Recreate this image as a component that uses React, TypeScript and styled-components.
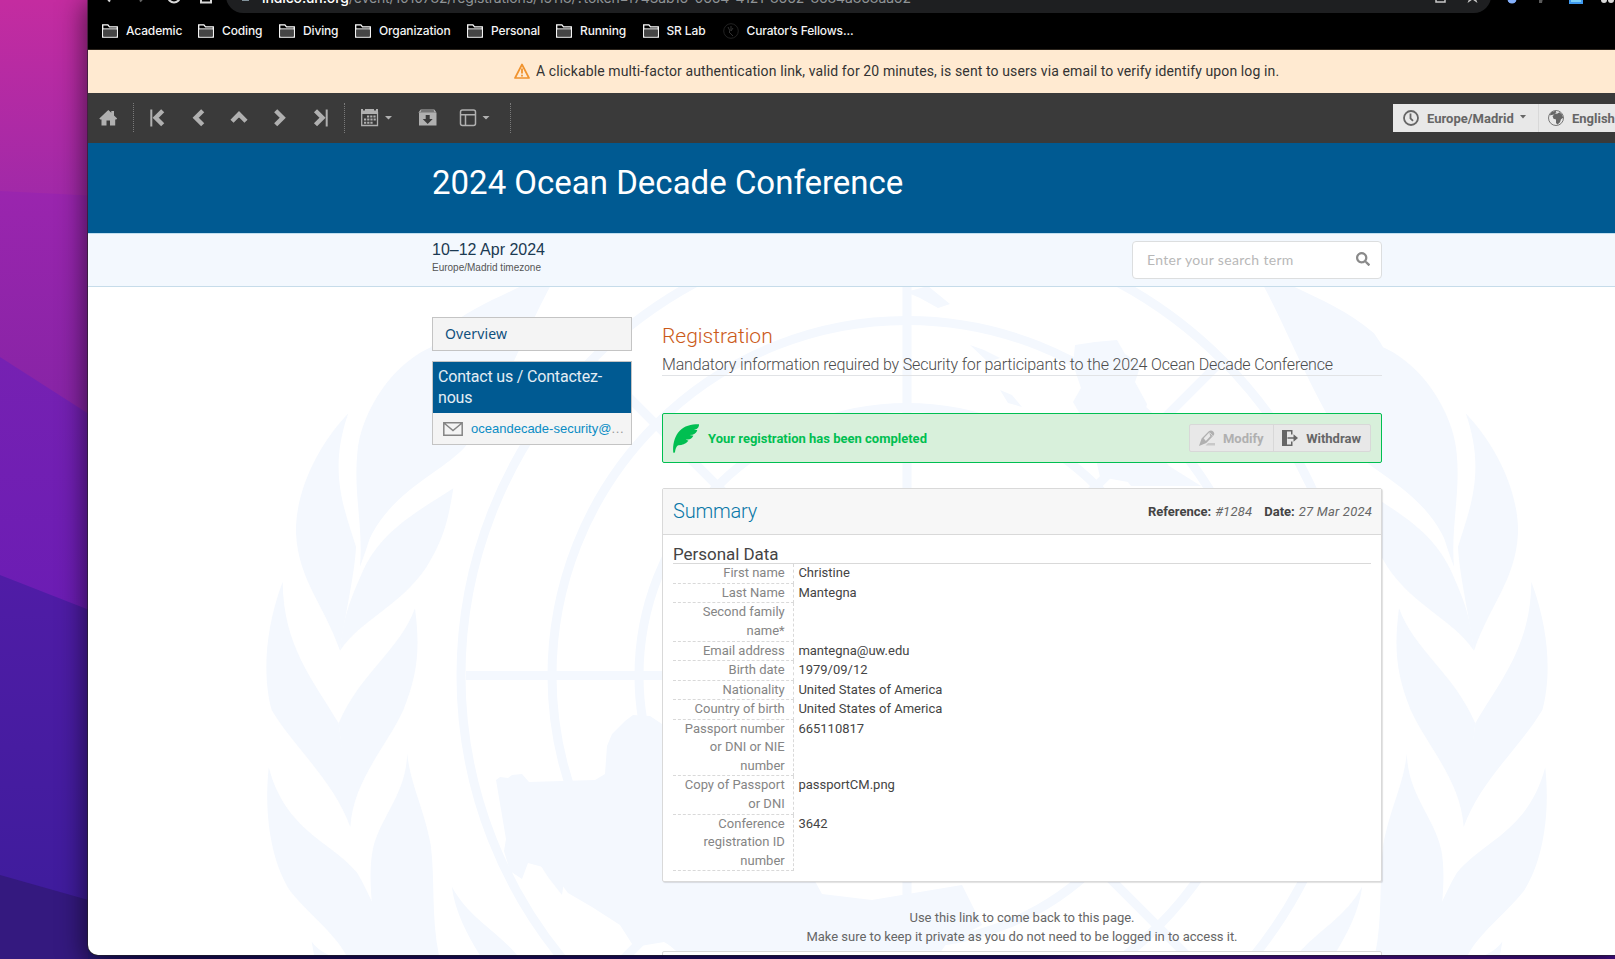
import React from 'react';
import styled, { createGlobalStyle } from 'styled-components';
import { FaSearch } from 'react-icons/fa';

const GlobalStyle = createGlobalStyle`
  * { box-sizing: border-box; }
  body { margin: 0; overflow: hidden; background: #200f60; font-family: Roboto, sans-serif; font-size: 13px; color: #555; }
`;

/* ---------- desktop and window frame ---------- */

const Desktop = styled.div`
  position: relative;
  width: 100vw;
  height: 959px;
  overflow: hidden;
  padding-left: 88px;
`;

const Wallpaper = styled.svg`
  position: absolute;
  inset: 0;
  width: 100%;
  height: 100%;
`;

const BrowserWindow = styled.div`
  position: relative;
  display: flex;
  flex-direction: column;
  height: 954.5px;
  background: #fff;
  border-bottom-left-radius: 10px;
  box-shadow: 0 0 0 0.6px #222, 0 6px 26px 4px rgba(0, 0, 0, 0.55);
  clip-path: inset(0 0 -10px -88px);
`;

const Page = styled.div`
  position: relative;
  flex: 1;
  display: flex;
  flex-direction: column;
  overflow: hidden;
  border-bottom-left-radius: 10px;
`;

/* ---------- browser chrome ---------- */

const Chrome = styled.div`
  flex: none;
  height: 50px;
  overflow: hidden;
  background: #000;
  border-bottom: 1px solid #2b241c;
`;

const AddressRow = styled.div`
  display: flex;
  align-items: flex-end;
  height: 13px;
`;

const NavIcons = styled.svg`
  flex: none;
  width: 138px;
  height: 13px;
`;

const AddressBar = styled.div`
  display: flex;
  align-items: flex-end;
  width: 1265px;
  height: 34px;
  border-radius: 17px;
  padding: 0 12px 0 10px;
  background: #1e1f21;
`;

const LockIcon = styled.svg`
  flex: none;
  width: 26px;
  height: 13px;
`;

const Url = styled.div`
  flex: 1;
  font: 400 14px/20px Inter, sans-serif;
  height: 25px;
  letter-spacing: -0.12px;
  white-space: nowrap;
  color: #8f9396;
  b { font-weight: 500; color: #fff; }
`;

const ExtensionIcons = styled.svg`
  flex: none;
  width: 124px;
  height: 13px;
`;

const BarIcons = styled.svg`
  flex: none;
  width: 58px;
  height: 13px;
`;

const Bookmarks = styled.div`
  display: flex;
  align-items: center;
  gap: 16px;
  height: 36px;
  padding-left: 14px;
`;

const Bookmark = styled.div<{ $label: number }>`
  display: flex;
  align-items: center;
  gap: 8px;
  font: 500 12px/16px Inter, sans-serif;
  letter-spacing: -0.14px;
  color: #f4f4f4;
  white-space: nowrap;
  svg { flex: none; }
  span { width: ${p => p.$label}px; }
`;

/* ---------- site header ---------- */

const Notice = styled.div`
  flex: none;
  display: flex;
  align-items: center;
  gap: 6px;
  height: 43px;
  padding: 0 0 1px 426px;
  background: #ffead1;
  color: #333;
  font-size: 14px;
  letter-spacing: 0.115px;
  white-space: nowrap;
`;

const Toolbar = styled.div`
  flex: none;
  display: flex;
  align-items: flex-start;
  height: 50px;
  padding-top: 10px;
  background: #3a3a3a;
`;

const ToolGroup = styled.div<{ $width: number }>`
  flex: none;
  width: ${p => p.$width}px;
  height: 30px;
  border-right: 1px dotted #7a7a7a;
  svg { display: block; }
`;

const Settings = styled.div`
  display: flex;
  margin-left: auto;
  margin-top: 1px;
  width: 222px;
  height: 28px;
  overflow: hidden;
  background: #e8e8e8;
`;

const Setting = styled.div<{ $width: number }>`
  flex: none;
  display: flex;
  align-items: center;
  width: ${p => p.$width}px;
  padding-left: 10px;
  border-right: 1px solid #d8d8d8;
  color: #666;
  font-weight: 700;
  span { margin: 1px 6px 0 8px; }
  & + & { padding-left: 9px; }
`;

const TitleBar = styled.header`
  flex: none;
  height: 90px;
  padding: 20px 0 0 344px;
  background: #005a92;
  color: #fff;
  font-size: 33px;
  line-height: 39px;
  letter-spacing: 0;
`;

const InfoStrip = styled.div`
  flex: none;
  display: flex;
  justify-content: space-between;
  width: 100%;
  height: 54px;
  padding: 7px 233px 0 344px;
  background: #f3f8fe;
  border-top: 1px solid #c0dff0;
  border-bottom: 1px solid #c6dcea;
`;

const EventDate = styled.div`
  font: 16px/18px "Liberation Sans", sans-serif;
  letter-spacing: 0;
  color: #1b3a52;
  small { display: block; font-size: 10px; line-height: 18px; color: #555; }
`;

const SearchBox = styled.div`
  display: flex;
  align-items: center;
  justify-content: space-between;
  width: 250px;
  height: 38px;
  padding: 0 11px 2px 14px;
  border: 1px solid #dcdedf;
  border-radius: 4px;
  background: #fff;
  font: 14px Lato, sans-serif;
  letter-spacing: 0.33px;
  color: #b8b8b8;
`;

/* ---------- body ---------- */

const Body = styled.div`
  position: relative;
  flex: 1;
  display: flex;
  gap: 30px;
  padding: 30px 233px 0 344px;
  overflow: hidden;
`;

const Watermark = styled.svg`
  position: absolute;
  left: 0;
  top: 0;
`;

const Sidebar = styled.aside`
  position: relative;
  flex: none;
  width: 200px;
`;

const MenuItem = styled.div`
  height: 34px;
  padding-left: 12px;
  margin-bottom: 10px;
  border: 1px solid #c4c4c4;
  background: #f4f4f4;
  font: 14px/32px "Noto Sans", sans-serif;
  letter-spacing: 0.12px;
  color: #10507c;
`;

const ContactCard = styled.div`
  height: 84px;
  border: 1px solid #c4c4c4;
  background: #f4f4f4;
`;

const ContactTitle = styled.div`
  height: 51px;
  padding: 4px 5px;
  background: #005a92;
  color: #e4edf4;
  font-size: 16px;
  font-weight: 400;
  line-height: 21px;
  letter-spacing: -0.19px;
`;

const ContactMail = styled.div`
  display: flex;
  align-items: center;
  height: 31px;
  padding-left: 10px;
  font: 13px "Liberation Sans", sans-serif;
  letter-spacing: 0.7px;
  color: #999;
  a { margin-left: 8px; color: #0a8cc4; letter-spacing: 0; }
`;

const Main = styled.main`
  position: relative;
  flex: none;
  width: 720px;
`;

const Heading = styled.h1`
  margin: 5px 0 0;
  font-size: 21px;
  font-weight: 300;
  line-height: 28px;
  color: #cb5a18;
`;

const SubHeading = styled.div`
  height: 26px;
  border-bottom: 1px solid #e1e3e6;
  font-size: 16px;
  font-weight: 300;
  line-height: 29px;
  letter-spacing: -0.165px;
  color: #4c4c4c;
  white-space: nowrap;
`;

const Completed = styled.div`
  display: flex;
  align-items: center;
  height: 50px;
  margin-top: 37px;
  padding: 0 10px;
  border: 1px solid #00bf51;
  border-radius: 2px;
  background: #d8f0db;
  color: #00bf51;
  font-weight: 700;
  > span { flex: 1; margin-left: 9px; }
`;

const ButtonGroup = styled.div`
  display: flex;
  height: 28px;
  border: 1px solid #d8d8d8;
  border-radius: 2px;
  background: #e8e8e8;
`;

const ActionButton = styled.div<{ $muted?: boolean }>`
  display: flex;
  align-items: center;
  gap: 8px;
  padding: 0 9.5px 0 9px;
  color: ${p => (p.$muted ? '#b0b0b0' : '#666')};
  & + & { border-left: 1px solid #d8d8d8; padding-left: 8px; padding-right: 9px; }
`;

const Panel = styled.section`
  height: 394px;
  margin-top: 25px;
  border: 1px solid #d9d9d9;
  border-radius: 2px;
  background: #fff;
  box-shadow: 1px 1px 1px rgba(0, 0, 0, 0.12);
`;

const PanelHeader = styled.div`
  display: flex;
  align-items: center;
  justify-content: space-between;
  height: 46px;
  padding: 0 9px 0 10px;
  border-bottom: 1px solid #d9d9d9;
  background: #f7f7f7;
`;

const PanelTitle = styled.div`
  padding-bottom: 2px;
  font-size: 20px;
  font-weight: 300;
  letter-spacing: -0.2px;
  color: #0a78a8;
`;

const Meta = styled.div`
  display: flex;
  gap: 4px;
  color: #666;
  b { color: #444; }
  i { letter-spacing: 0.2px; }
  i + b { margin-left: 8px; }
`;

const SectionTitle = styled.h2`
  margin: 0 10px 0.8px;
  height: 28.5px;
  border-bottom: 1px solid #d9d9d9;
  font-size: 17px;
  font-weight: 400;
  line-height: 39px;
  letter-spacing: -0.04px;
  color: #444;
`;

const Row = styled.div`
  display: flex;
  margin-left: 10px;
  line-height: 18.57px;
`;

const Label = styled.div`
  width: 121px;
  padding: 0 8.3px 0 0;
  border-right: 1px dashed #d9d9d9;
  border-bottom: 1px dashed #d9d9d9;
  text-align: right;
  color: #858585;
  white-space: pre-line;
`;

const Value = styled.div`
  padding-left: 4.4px;
  color: #444;
`;

const LinkNote = styled.p`
  margin: 26px 0 5px;
  text-align: center;
  line-height: 19px;
  letter-spacing: -0.02px;
  color: #666;
`;

const LinkBox = styled.div`
  height: 40px;
  border: 1px solid #d9d9d9;
  border-radius: 2px;
  background: #fff;
`;

/* ---------- icons ---------- */

const Folder = () => (
  <svg width="16" height="14" viewBox="0 0 16 14">
    <path d="M.7 13.2V.8h5.2l1.6 2h7.8v10.4z" fill="#000" stroke="#fff" strokeWidth="1.3" />
    <path d="M1.4 5.4h13.2v7.1H1.4z" fill="#454545" />
    <path d="M1 4.9h14" stroke="#fff" strokeWidth="1" />
  </svg>
);

const Caret = ({ color = '#666' }: { color?: string }) => (
  <svg width="6" height="6" viewBox="0 0 6 6"><path d="M0 0h6L3 3.6z" fill={color} /></svg>
);

const Feather = () => (
  <svg width="26" height="29" viewBox="0 0 26 29">
    <path d="M.3 28.8C-.6 21 1.5 12.500 6.500 7 11.500 1.800 18.500.2 26 .3c.2 2-.8 3.700-2.400 4.800l-2.600 1 3.300-.1c-.7 2.400-2.300 3.900-4.700 4.700l-2.900.4 3.700.7c-1.200 2.400-3 3.500-5.400 3.800l-2.400-.2 2.900 1.300c-3.300 3.500-6.300 4.400-10 4.600-1.900.5-3.200 3.700-3.500 7.300z" fill="#00bf51" />
  </svg>
);

const Pencil = () => (
  <svg width="16" height="16" viewBox="0 0 16 16">
    <path d="M9 13h7v2.500H6.500z" fill="#c8c8c8" />
    <path d="M2.600 8.600L9.800 1.200C11.200 0 13 .2 14.200 1.400c1.200 1.100 1.500 2.700.3 4.200L7.300 13 0 16z" fill="#b0b0b0" />
    <path d="M4.700 8.200L10.300 2.500l1 3.800-4.500 4.700z" fill="#e8e8e8" />
    <path d="M12.600 6.300l.8-.8-2.700-2.900" stroke="#e8e8e8" strokeWidth=".7" fill="none" />
  </svg>
);

const Exit = () => (
  <svg width="16" height="16" viewBox="0 0 16 16">
    <path d="M0 0h10.500v4.500H9V1.500H5v13h4v-3h1.500V16H0z" fill="#666" />
    <path d="M5.500 7.200h6V4.300L16 8l-4.500 3.800V8.800h-6z" fill="#666" />
  </svg>
);

const Mail = () => (
  <svg width="20" height="14" viewBox="0 0 20 14" fill="none" stroke="#858585" strokeWidth="1.500">
    <path d="M.8.8h18.400v12.400H.8zM1 1l9 7.500L19 1" />
  </svg>
);

const Warning = () => (
  <svg width="16" height="16" viewBox="0 0 16 16">
    <path d="M8 1.500L15 15H1z" fill="none" stroke="#f0932e" strokeWidth="1.700" strokeLinejoin="round" />
    <path d="M8 5.500v5M8 11.700v1.800" stroke="#f0932e" strokeWidth="1.800" />
  </svg>
);

const Clock = () => (
  <svg width="16" height="16" viewBox="0 0 16 16" fill="none" stroke="#666" strokeWidth="1.800">
    <circle cx="8" cy="8" r="7" /><path d="M7.500 3.500v4.800l2.500 2.600" />
  </svg>
);

const Globe = () => (
  <svg width="16" height="16" viewBox="0 0 16 16">
    <circle cx="8" cy="8" r="7.500" fill="none" stroke="#777" />
    <path d="M3 2.500L7.500.8l1 1.700-2 .8L9 3.800l2.500-1.500L14 4.500l1.200 3.200-2.200 1.500-1 3-2.500 2.300L8 13V9.500l-2.500-.8L4.500 6l2-1.500L3.500 5l-1.800.5z" fill="#666" />
  </svg>
);

/* Home, first, previous, up, next and last */
const NavTools = () => (
  <svg width="258" height="30" viewBox="88 103 258 30">
    <path d="M99.300 118.400L108.300 110l3 2.800V111h2.700v4.400l3.200 3-1 1.100h-1v6h-5.200v-5h-3.500v5h-5v-6h-1.200z" fill="#b0b0b0" />
    <path d="M133.500 103v30" stroke="#7a7a7a" strokeDasharray="1 1" />
    <path d="M151.300 109.500v17M326.700 109.500v17" stroke="#b0b0b0" strokeWidth="2" />
    <g fill="none" stroke="#b0b0b0" strokeWidth="4.400">
      <path d="M162.700 110.700l-7 7 7 7M202.700 110.700l-7 7 7 7M232 121.200l7-7 7 7M275.700 110.700l7 7-7 7M315.500 110.700l7 7-7 7" />
    </g>
  </svg>
);

/* Calendar, archive and layout */
const ViewTools = () => (
  <svg width="164" height="30" viewBox="345 103 164 30">
    <path d="M361.700 112.500h15.800v13h-15.800z" fill="none" stroke="#b0b0b0" strokeWidth="1.300" />
    <path d="M361 109h2v1.500h2V109h9v1.500h2V109h2v5h-17z" fill="#b0b0b0" />
    <path d="M367 116.500h9M364 119.500h12M364 122.800h9" stroke="#b0b0b0" strokeWidth="2" strokeDasharray="2.200 1" />
    <path d="M385 116h7l-3.500 3.600zM482.500 116h7l-3.500 3.600z" fill="#b0b0b0" />
    <path d="M421 110h13l1.500 2.200h-16z" fill="none" stroke="#b0b0b0" strokeWidth="1.200" />
    <path d="M419 113h17.500v12.500H419zM425.700 115v4h-3l5 5 5-5h-3v-4z" fill="#b0b0b0" fillRule="evenodd" />
    <path d="M462.500 110h11q2 0 2 2v11.500q0 2-2 2h-11q-2 0-2-2V112q0-2 2-2zM460.500 114.700h15M465.500 114.700v10.800" fill="none" stroke="#b0b0b0" strokeWidth="1.500" />
  </svg>
);

/* One half of the laurel wreath; the other half is its mirror image */
const Laurel = () => (
  <g>
    <path d="M870 20C800 150 700 400 620 495C540 590 350 640 300 860C315 780 325 740 340 690C370 540 440 300 540 160C620 90 700 60 780 20z" />
    <path d="M530 195C400 240 300 400 292 520C280 640 310 740 300 860C330 780 345 730 345 670C380 520 470 400 530 195z" />
    <path d="M265 400C170 500 105 640 108 760C115 900 190 970 240 1112C250 1030 285 880 288 800C250 680 205 570 265 400z" />
    <path d="M580 625C500 680 370 740 310 870C270 960 250 1010 240 1112C300 1020 420 980 500 860C550 780 565 720 580 625z" />
    <path d="M68 905C10 1060 10 1200 35 1290C100 1400 220 1500 271 1641C270 1540 250 1440 236 1330C160 1200 70 1100 68 905z" />
    <path d="M465 985C420 1110 300 1180 236 1330L271 1641C280 1500 380 1400 430 1290C475 1180 480 1100 465 985z" />
  </g>
);

const LowerLaurel = () => (
  <g>
    <path d="M602 1150C590 1260 610 1360 650 1420C700 1480 750 1510 780 1568H880C860 1500 830 1430 800 1380C740 1310 640 1290 602 1150z" />
    <path d="M912 1120C910 1210 850 1260 835 1330C825 1380 830 1450 850 1568H985C965 1480 975 1400 965 1320C950 1240 920 1190 912 1120z" />
    <path d="M1012 1410C1050 1480 1120 1510 1165 1568H1080C1050 1520 1020 1470 1012 1410z" />
    <path d="M698 1530Q715 1555 760 1568H705z" />
  </g>
);

const Emblem = () => (
  <Watermark width="1527" height="668" viewBox="88 287 1527 668" fill="#f4f8fe">
    <g transform="translate(260 280) scale(.33333)"><Laurel /></g>
    <g transform="translate(1554 280) scale(-.33333 .33333)"><Laurel /></g>
    <g transform="translate(0 240) scale(.44643 .45850)"><LowerLaurel /></g>
    <g transform="translate(1814 240) scale(-.44643 .45850)"><LowerLaurel /></g>
    <g fill="none" stroke="#f4f8fe" strokeWidth="9">
      <circle cx="907" cy="675.500" r="446" />
      <circle cx="907" cy="675.500" r="355" />
      <circle cx="907" cy="675.500" r="268" />
      <circle cx="907" cy="675.500" r="178" />
      <path d="M466 675.500h882M907 230v730M594 362.500L1220 988.500M1220 362.500L594 988.500" />
    </g>
    <path d="M496 780l4-3 8 1 4-3 10-1 7 8 66-2 10-6 2-28 5-12 13-13 8-6 17 1 12 8 100 60 60 110 50 6 90-15 20 40-35 18-20 28-30-12-22 30H752l-50-25-38-22-30 5-14-22-28-18-24-14-18-24-22-6-6 16-12-8-6-20 2-12z" />
    <path d="M524 829l14 12 10 2 4 18 12 20-2 14-14-18-14-22z" />
    <path d="M1075 345l20-3 22-2 8 14 16 10-6 18 12 22-6 26 28 36 32 20h-70l-38-50-20-34 8-14-8-24z" />
    <path d="M906 292l22-6 22 18-12 4-18-10zM1000 390l12 5 10 12-14-4zM970 345l14 5 16 8-12 4zM1095 455l30 10 20 20-45-8z" />
    <path d="M650 905l22-12 40 18 50 8 20-12 30 26 15 22H690l-22-14z" />
  </Watermark>
);

/* ---------- content ---------- */

const bookmarks: [string, number][] = [
  ['Academic', 56], ['Coding', 41], ['Diving', 36], ['Organization', 72], ['Personal', 49], ['Running', 46.500], ['SR Lab', 40],
];

const fields: [string, string][] = [
  ['First name', 'Christine'],
  ['Last Name', 'Mantegna'],
  ['Second family\nname*', ''],
  ['Email address', 'mantegna@uw.edu'],
  ['Birth date', '1979/09/12'],
  ['Nationality', 'United States of America'],
  ['Country of birth', 'United States of America'],
  ['Passport number\nor DNI or NIE\nnumber', '665110817'],
  ['Copy of Passport\nor DNI', 'passportCM.png'],
  ['Conference\nregistration ID\nnumber', '3642'],
];

export default function App() {
  return (
    <>
      <GlobalStyle />
      <Desktop>
        <Wallpaper viewBox="0 0 1615 959" preserveAspectRatio="none">
          <defs>
            <linearGradient id="w1" x1="0" y1="0" x2="0" y2="1"><stop offset="0" stopColor="#c42ca0" /><stop offset="1" stopColor="#a029a8" /></linearGradient>
            <linearGradient id="w2" x1="0" y1="0" x2="0" y2="1"><stop offset="0" stopColor="#9a25ae" /><stop offset="1" stopColor="#8424a4" /></linearGradient>
            <linearGradient id="w3" x1="0" y1="0" x2="0" y2="1"><stop offset="0" stopColor="#7621b2" /><stop offset="1" stopColor="#6a1cb4" /></linearGradient>
            <linearGradient id="w4" x1="0" y1="0" x2="0" y2="1"><stop offset="0" stopColor="#501ca6" /><stop offset="1" stopColor="#3e1c9c" /></linearGradient>
            <linearGradient id="w5" x1="0" y1="0" x2="1" y2="0"><stop offset="0" stopColor="#2b1a80" /><stop offset=".05" stopColor="#1d1066" /><stop offset=".62" stopColor="#2a1080" /><stop offset=".68" stopColor="#5a14a8" /><stop offset="1" stopColor="#4c1098" /></linearGradient>
          </defs>
          <rect width="1615" height="200" fill="url(#w1)" />
          <path d="M0 191L120 197V440H0z" fill="url(#w2)" />
          <path d="M0 357L120 434V640H0z" fill="url(#w3)" />
          <path d="M0 575L120 622V920H0z" fill="url(#w4)" />
          <path d="M0 875L120 909V959H0z" fill="#34197f" />
          <rect x="88" y="950" width="1527" height="9" fill="url(#w5)" />
        </Wallpaper>
        <BrowserWindow>
          <Chrome>
            <AddressRow>
              <NavIcons viewBox="88 0 138 13" fill="none" stroke="#d8d8d8" strokeWidth="2">
                <path d="M105-4l5 5.500" />
                <path d="M145-4l-5 5.500" stroke="#666" />
                <circle cx="174" cy="-3.500" r="6" />
                <path d="M201-5v7.500h10V-5" />
              </NavIcons>
              <AddressBar>
                <LockIcon viewBox="0 0 26 13"><path d="M6-4h7v5H6z" fill="#82929b" /></LockIcon>
                <Url><b>indico.un.org</b>/event/1010782/registrations/15118/?token=f743ab16-0664-4121-8662-8684a868aa62</Url>
                <BarIcons viewBox="0 0 58 13">
                  <path d="M15-4v6h9v-6" fill="none" stroke="#c8c8c8" strokeWidth="1.500" />
                  <path d="M46.500 3l5-3.500L56.500 3l-2-5h-6z" fill="#c8c8c8" />
                </BarIcons>
              </AddressBar>
              <ExtensionIcons viewBox="1491 0 124 13">
                <circle cx="1512" cy="-1" r="4.500" fill="#84b0fb" />
                <path d="M1539-2h4l-1 5h-3z" fill="#5a5a5a" />
                <path d="M1569-2h14v6h-14z" fill="#3f9af0" />
                <path d="M1571-2h10v4h-10z" fill="#7dd0f8" />
                <circle cx="1604" cy="0" r="3" fill="#d8d8d8" />
                <circle cx="1611" cy="0" r="3" fill="#d8d8d8" />
              </ExtensionIcons>
            </AddressRow>
            <Bookmarks>
              {bookmarks.map(([name, w]) => (
                <Bookmark key={name} $label={w}><Folder /><span>{name}</span></Bookmark>
              ))}
              <Bookmark $label={108}>
                <svg width="16" height="16" viewBox="0 0 16 16" fill="none" stroke="#222">
                  <circle cx="8" cy="8" r="7.300" /><path d="M5 4l2 4-1 1 4 4M8 3v5l2-3" stroke="#333" />
                </svg>
                <span>Curator’s Fellows...</span>
              </Bookmark>
            </Bookmarks>
          </Chrome>
          <Page>
            <Notice>
              <Warning />
              A clickable multi-factor authentication link, valid for 20 minutes, is sent to users via email to verify identify upon log in.
            </Notice>
            <Toolbar>
              <ToolGroup $width={257}><NavTools /></ToolGroup>
              <ToolGroup $width={166}><ViewTools /></ToolGroup>
              <Settings>
                <Setting $width={146}><Clock /><span>Europe/Madrid</span><Caret /></Setting>
                <Setting $width={110}><Globe /><span>English</span></Setting>
              </Settings>
            </Toolbar>
            <TitleBar>2024 Ocean Decade Conference</TitleBar>
            <InfoStrip>
              <EventDate>10–12 Apr 2024<small>Europe/Madrid timezone</small></EventDate>
              <SearchBox>Enter your search term<FaSearch size={14} color="#8a8a8a" /></SearchBox>
            </InfoStrip>
            <Body>
              <Emblem />
              <Sidebar>
                <MenuItem>Overview</MenuItem>
                <ContactCard>
                  <ContactTitle>Contact us / Contactez-<br />nous</ContactTitle>
                  <ContactMail><Mail /><a>oceandecade-security@</a>...</ContactMail>
                </ContactCard>
              </Sidebar>
              <Main>
                <Heading>Registration</Heading>
                <SubHeading>Mandatory information required by Security for participants to the 2024 Ocean Decade Conference</SubHeading>
                <Completed>
                  <Feather />
                  <span>Your registration has been completed</span>
                  <ButtonGroup>
                    <ActionButton $muted><Pencil />Modify</ActionButton>
                    <ActionButton><Exit />Withdraw</ActionButton>
                  </ButtonGroup>
                </Completed>
                <Panel>
                  <PanelHeader>
                    <PanelTitle>Summary</PanelTitle>
                    <Meta><b>Reference:</b><i>#1284</i><b>Date:</b><i>27 Mar 2024</i></Meta>
                  </PanelHeader>
                  <SectionTitle>Personal Data</SectionTitle>
                  {fields.map(([label, value]) => (
                    <Row key={label}><Label>{label}</Label><Value>{value}</Value></Row>
                  ))}
                </Panel>
                <LinkNote>Use this link to come back to this page.<br />Make sure to keep it private as you do not need to be logged in to access it.</LinkNote>
                <LinkBox />
              </Main>
            </Body>
          </Page>
        </BrowserWindow>
      </Desktop>
    </>
  );
}
